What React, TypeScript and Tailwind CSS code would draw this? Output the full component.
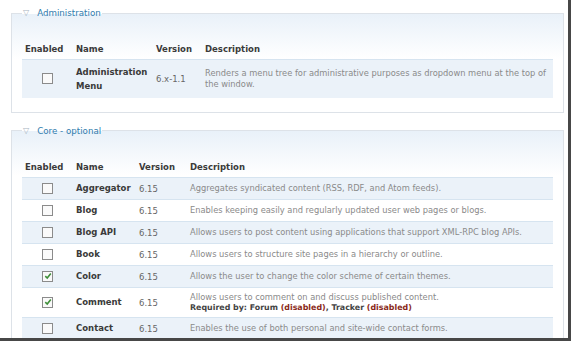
// Modules admin listing (Drupal 6 Garland look)
import type { ReactNode } from 'react';

type Mod = {
  name: ReactNode;
  version: string;
  desc: ReactNode;
  checked?: boolean;
};

const ADMIN: Mod[] = [
  {
    name: (
      <>
        Administration
        <br />
        Menu
      </>
    ),
    version: '6.x-1.1',
    desc: 'Renders a menu tree for administrative purposes as dropdown menu at the top of the window.',
  },
];

const CORE: Mod[] = [
  { name: 'Aggregator', version: '6.15', desc: 'Aggregates syndicated content (RSS, RDF, and Atom feeds).' },
  { name: 'Blog', version: '6.15', desc: 'Enables keeping easily and regularly updated user web pages or blogs.' },
  { name: 'Blog API', version: '6.15', desc: 'Allows users to post content using applications that support XML-RPC blog APIs.' },
  { name: 'Book', version: '6.15', desc: 'Allows users to structure site pages in a hierarchy or outline.' },
  { name: 'Color', version: '6.15', desc: 'Allows the user to change the color scheme of certain themes.', checked: true },
  {
    name: 'Comment',
    version: '6.15',
    checked: true,
    desc: (
      <div className="leading-[10px]">
        Allows users to comment on and discuss published content.
        <div className="text-[7.9px] leading-[11px] font-bold text-[#444]">
          Required by: Forum <span className="text-[#8a2a1a]">(disabled)</span>, Tracker{' '}
          <span className="text-[#8a2a1a]">(disabled)</span>
        </div>
      </div>
    ),
  },
  { name: 'Contact', version: '6.15', desc: 'Enables the use of both personal and site-wide contact forms.' },
];

function Checkbox({ checked }: { checked?: boolean }) {
  return (
    <span className="inline-flex w-[11px] h-[11px] border border-[#8b8b8b] bg-[#fafafa] items-center justify-center align-middle">
      {checked && (
        <svg width="8" height="8" viewBox="0 0 8 8">
          <path d="M1.3 4.2 L3.2 6 L6.8 1.6" fill="none" stroke="#3f8f3a" strokeWidth="1.6" />
        </svg>
      )}
    </span>
  );
}

function ModuleTable({ rows, widths, tall }: { rows: Mod[]; widths: string[]; tall?: boolean }) {
  const pad = tall ? 'py-[5px]' : 'py-[4px]';
  return (
    <table className="w-full table-fixed border-collapse">
      <colgroup>
        {widths.map((w, i) => (
          <col key={i} className={w} />
        ))}
      </colgroup>
      <thead>
        <tr className="text-[8.5px] font-bold text-[#3a3a3a] text-left">
          <th className="px-[3px] h-[19px] font-bold">Enabled</th>
          <th className="px-[3px] font-bold">Name</th>
          <th className="px-[3px] font-bold">Version</th>
          <th className="px-[3px] font-bold">Description</th>
        </tr>
      </thead>
      <tbody>
        {rows.map((m, i) => (
          <tr
            key={i}
            className={`border-t border-[#d6e4f0] ${i % 2 === 0 ? 'bg-[#ebf2f9]' : 'bg-white'}`}
          >
            <td className={`px-[3px] ${pad} text-center align-middle text-[8px] leading-[12px]`}>
              <Checkbox checked={m.checked} />
            </td>
            <td
              className={`px-[3px] ${pad} text-[8.5px] ${tall ? 'leading-[14px]' : 'leading-[13px]'} font-bold text-[#3a3a3a] align-middle`}
            >
              {m.name}
            </td>
            <td className={`px-[3px] ${pad} text-[8.5px] leading-[12px] text-[#666] align-middle`}>{m.version}</td>
            <td className={`px-[3px] ${pad} text-[8.3px] leading-[11px] text-[#8a8a8a] align-middle`}>{m.desc}</td>
          </tr>
        ))}
      </tbody>
    </table>
  );
}

function Fieldset({ title, children, className }: { title: string; children: ReactNode; className?: string }) {
  return (
    <fieldset
      className={`border border-[#dde2e8] bg-gradient-to-b from-[#e9f1f9] to-white to-[45px] px-[10px] ${className ?? ''}`}
    >
      <legend className="ml-0 px-[1px] text-[8.7px] leading-[12px] text-[#2f7cae] flex items-center gap-[8px]">
        <span className="text-[#a9b4c0] text-[8px]">▽</span>
        <span>{title}</span>
      </legend>
      {children}
    </fieldset>
  );
}

export default function App() {
  return (
    <div className="w-[573px] h-[343px] bg-white overflow-hidden" style={{ fontFamily: '"DejaVu Sans", Verdana, sans-serif' }}>
      <div className="w-[571px] h-[341px] border-r-[3px] border-b-[3px] border-[#474747] overflow-hidden pt-[7px] pl-[11px]">
        <Fieldset title="Administration" className="w-[553px] pt-[21px] pb-[14px]">
          <ModuleTable rows={ADMIN} widths={['w-[51px]', 'w-[80px]', 'w-[49px]', '']} tall />
        </Fieldset>
        <Fieldset title="Core - optional" className="w-[553px] mt-[12px] pt-[22px]">
          <ModuleTable rows={CORE} widths={['w-[51px]', 'w-[63px]', 'w-[51px]', '']} />
        </Fieldset>
      </div>
    </div>
  );
}
